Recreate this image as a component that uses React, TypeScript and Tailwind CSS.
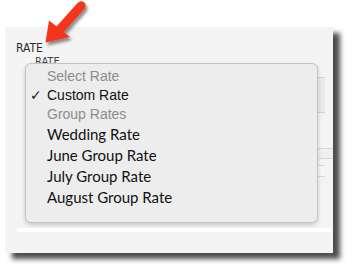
import React from "react";

const arial = { fontFamily: '"Liberation Sans", Arial, sans-serif' };
const lato = { fontFamily: 'Lato, "Open Sans", sans-serif' };
const cond = { fontFamily: '"DejaVu Sans Condensed", "DejaVu Sans", sans-serif' };

function Arrow() {
  return (
    <svg className="absolute left-0 top-0" width="100" height="50" viewBox="0 0 100 50">
      <defs>
        <filter id="sh" x="-30%" y="-30%" width="160%" height="160%">
          <feDropShadow dx="2" dy="3" stdDeviation="1.6" floodColor="#000" floodOpacity="0.45" />
        </filter>
      </defs>
      <g filter="url(#sh)" fill="#f3361d">
        <polygon points="45.5,42.5 49,20.5 70,37" />
        <polygon points="55.5,27.6 62.5,33.4 84.8,8.6 78,2.4" strokeLinejoin="round" />
        <circle cx="81.4" cy="5.5" r="4.2" />
      </g>
    </svg>
  );
}

function Row({ children, gray, check, font, h }: { children: React.ReactNode; gray?: boolean; check?: boolean; font: React.CSSProperties; h: string }) {
  return (
    <div className={`flex items-center pl-[4px] ${h}`}>
      <span className="w-[17px] text-[14px] text-[#1a1a1a]" style={{ fontFamily: '"DejaVu Sans", sans-serif' }}>
        {check ? "✓" : ""}
      </span>
      <span className={gray ? "text-[#8c8c8c]" : "text-[#111]"} style={font}>
        {children}
      </span>
    </div>
  );
}

export default function App() {
  return (
    <div className="relative w-[352px] h-[269px] bg-white overflow-hidden">
      <div className="ml-[5px] mt-[27px] w-[328px] h-[226px] bg-[#f4f4f4] shadow-[7px_6px_5px_rgba(0,0,0,0.7)] flex flex-col">
        <div className="pl-[11px] mt-[15px] text-[12px] leading-none text-[#2a2a2a]" style={cond}>RATE</div>
        <div className="pl-[30px] mt-[2px] text-[11px] leading-none text-[#444]" style={cond}>RATE</div>
        <div className="ml-[25px] mt-[10px] w-[295px] h-[36px] border-y border-[#d4d4d4] bg-[#eaeaea]" />
        <div className="ml-[25px] mt-[35px] w-[303px] h-[11px] border-y border-[#d8d8d8] bg-[#efefef]" />
        <div className="ml-[25px] mt-[6px] w-[295px] h-[12px] border-y border-[#d8d8d8] bg-[#f7f7f7]" />
        <div className="ml-[12px] mt-[51px] w-[314px] h-[4px] bg-white" />
      </div>
      <Arrow />
      <div className="absolute left-[25px] top-[63px] w-[293px] h-[160px] rounded-[6px] border border-[#c4c4c4] bg-[#ededed] shadow-[0_2px_4px_rgba(0,0,0,0.18)] pt-[3px]">
        <Row gray font={{ ...arial, fontSize: 14 }} h="h-[19px]">Select Rate</Row>
        <Row check font={{ ...arial, fontSize: 14 }} h="h-[19px]">Custom Rate</Row>
        <Row gray font={{ ...arial, fontSize: 14 }} h="h-[19px]">Group Rates</Row>
        <Row font={{ ...lato, fontSize: 15 }} h="h-[21px]">Wedding Rate</Row>
        <Row font={{ ...lato, fontSize: 15 }} h="h-[21px]">June Group Rate</Row>
        <Row font={{ ...lato, fontSize: 15 }} h="h-[21px]">July Group Rate</Row>
        <Row font={{ ...lato, fontSize: 15 }} h="h-[21px]">August Group Rate</Row>
      </div>
    </div>
  );
}
